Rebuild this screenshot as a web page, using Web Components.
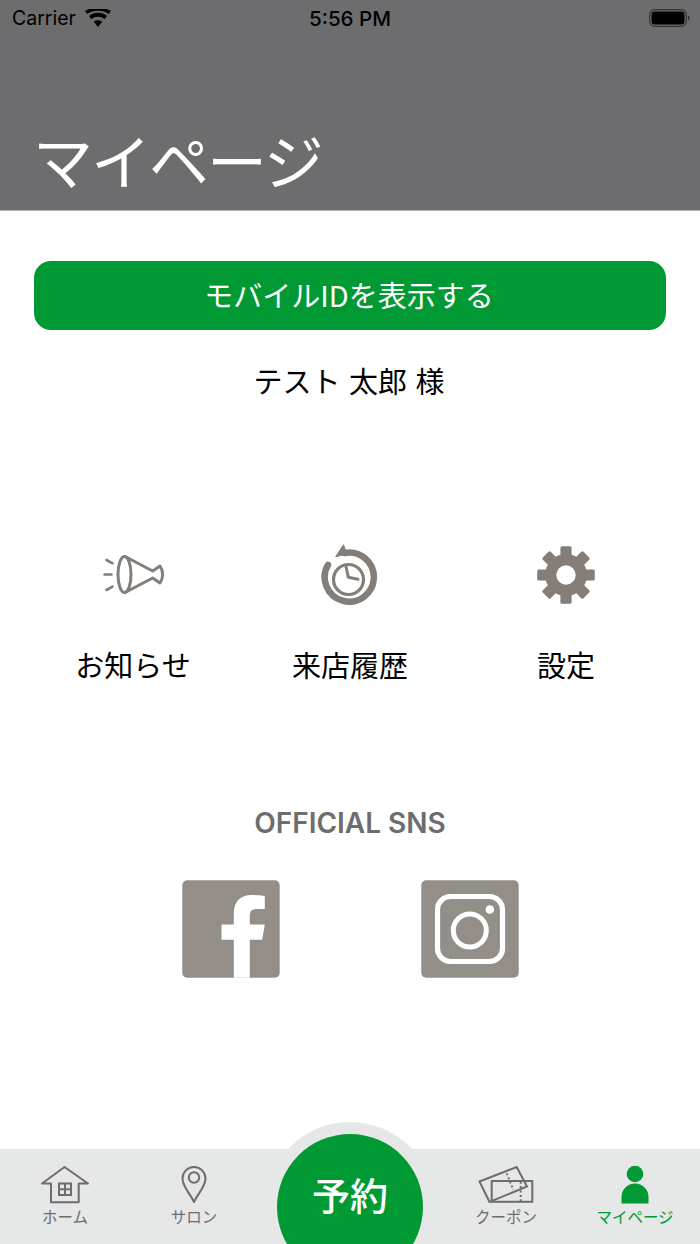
<!DOCTYPE html>
<html lang="ja">
<head>
<meta charset="utf-8">
<title>マイページ</title>
<style>
html, body { margin: 0; padding: 0; background: #fff; }
body { font-family: "Noto Sans CJK JP", "Noto Sans", sans-serif; }
</style>
</head>
<body>
<my-page>
  <page-header title="マイページ"></page-header>
  <id-button>モバイルIDを表示する</id-button>
  <user-name>テスト 太郎 様</user-name>
  <menu-row>
    <menu-item label="お知らせ">
      <svg slot="icon" width="64" height="64" viewBox="101 543 64 64" fill="none" stroke="#857d78" stroke-width="3" stroke-linecap="round" stroke-linejoin="round">
        <ellipse cx="124.5" cy="574.5" rx="6.5" ry="18"/>
        <path d="M125 556.5 152.7 571 160 566C163.5 571 163.5 578 160 583L152.7 578 125 592.5"/>
        <path d="M106.5 560 112.5 563.3M104.5 574.5H111.5M106.5 590 112.5 586.7" stroke-width="2.6"/>
      </svg>
    </menu-item>
    <menu-item label="来店履歴">
      <svg slot="icon" width="64" height="64" viewBox="318 543 64 64" fill="none" stroke="#857d78" stroke-linecap="round" stroke-linejoin="round">
        <path d="M344.5 553A24.6 24.6 0 1 1 328 564.8" stroke-width="6.5"/>
        <path d="M343.3 545 335.7 556.7 346.7 554Z" fill="#857d78" stroke="#857d78" stroke-width="1"/>
        <circle cx="348.5" cy="579.5" r="15" stroke-width="3.2"/>
        <path d="M346 566.5 348.3 577.3 358 579.3" stroke-width="3"/>
      </svg>
    </menu-item>
    <menu-item label="設定">
      <svg slot="icon" width="64" height="64" viewBox="534 543 64 64">
        <g fill="#857d78" transform="translate(566 575)">
          <path fill-rule="evenodd" d="M-21 0A21 21 0 1 0 21 0 21 21 0 1 0-21 0ZM-9.7 0A9.7 9.7 0 1 1 9.7 0 9.7 9.7 0 1 1-9.7 0Z"/>
          <rect x="-5.6" y="-28.8" width="11.2" height="12" rx="1.6"/>
          <rect x="-5.6" y="-28.8" width="11.2" height="12" rx="1.6" transform="rotate(45)"/>
          <rect x="-5.6" y="-28.8" width="11.2" height="12" rx="1.6" transform="rotate(90)"/>
          <rect x="-5.6" y="-28.8" width="11.2" height="12" rx="1.6" transform="rotate(135)"/>
          <rect x="-5.6" y="-28.8" width="11.2" height="12" rx="1.6" transform="rotate(180)"/>
          <rect x="-5.6" y="-28.8" width="11.2" height="12" rx="1.6" transform="rotate(225)"/>
          <rect x="-5.6" y="-28.8" width="11.2" height="12" rx="1.6" transform="rotate(270)"/>
          <rect x="-5.6" y="-28.8" width="11.2" height="12" rx="1.6" transform="rotate(315)"/>
        </g>
      </svg>
    </menu-item>
  </menu-row>
  <sns-links heading="OFFICIAL SNS">
    <svg width="98" height="98" viewBox="181.5 879.5 98 98">
      <rect x="181.8" y="879.8" width="97.4" height="97.4" rx="5" fill="#948e89"/>
      <path fill="#fff" d="M233.3 977.2V939.3H221V924H233.3V913C233.3 901 240 894.5 251 894.5 256 894.5 261 895 264.3 895.5V908.5H257C251 908.5 249.3 911 249.3 915V924H264.3L261.7 939.3H249.3V977.2Z"/>
    </svg>
    <svg width="98" height="98" viewBox="420.5 879.5 98 98">
      <rect x="420.8" y="879.8" width="97.4" height="97.4" rx="5" fill="#948e89"/>
      <rect x="437" y="896" width="65" height="65" rx="13" fill="none" stroke="#fff" stroke-width="5.2"/>
      <circle cx="469.3" cy="930" r="16.5" fill="none" stroke="#fff" stroke-width="5"/>
      <circle cx="489.3" cy="909" r="4.3" fill="#fff"/>
    </svg>
  </sns-links>
  <tab-bar slot="tabs">
    <tab-item label="ホーム">
      <svg width="60" height="40" viewBox="35 1165 60 40" fill="none" stroke="#6d6d6f" stroke-width="2">
        <path d="M51 1183.5H42L64.5 1167 88 1183.5H78.7V1202.3H51Z" stroke-linejoin="round"/>
        <path d="M59 1183.5H71V1195H59ZM65 1183.5V1195M59 1189.2H71"/>
      </svg>
    </tab-item>
    <tab-item label="サロン">
      <svg width="60" height="40" viewBox="164 1165 60 40" fill="none" stroke="#6d6d6f" stroke-width="2">
        <path d="M194 1202C190 1193 182.5 1187 182.5 1178.5A11.5 11.5 0 0 1 205.5 1178.5C205.5 1187 198 1193 194 1202Z" stroke-linejoin="round"/>
        <circle cx="194" cy="1177.5" r="5.2"/>
      </svg>
    </tab-item>
    <reserve-button>予約</reserve-button>
    <tab-item label="クーポン">
      <svg width="60" height="40" viewBox="476 1165 60 40" fill="none" stroke="#6d6d6f" stroke-width="2">
        <path d="M479.5 1181.5 516.7 1167 527 1186.5 489.5 1202Z"/>
        <rect x="491.7" y="1181" width="40.6" height="20.8"/>
        <path d="M506.7 1173.3 513.3 1190M520.7 1181.7V1201.7" stroke-dasharray="2 2.4"/>
      </svg>
    </tab-item>
    <tab-item label="マイページ" active>
      <svg width="60" height="40" viewBox="605 1165 60 40" fill="#009933">
        <circle cx="635" cy="1174" r="8.3"/>
        <path d="M621.5 1203.5V1197A13.5 13.5 0 0 1 648.5 1197V1203.5Z"/>
      </svg>
    </tab-item>
  </tab-bar>
</my-page>

<script>
class MyPage extends HTMLElement {
  constructor() {
    super();
    this.attachShadow({ mode: 'open' });
    this.shadowRoot.innerHTML = `
<style>
:host {
  display: flex;
  flex-direction: column;
  width: 700px;
  height: 1244px;
  overflow: hidden;
  background: #fff;
}
main {
  flex: 1;
  display: flex;
  flex-direction: column;
  min-height: 0;
}
</style>
<main><slot></slot></main>
<slot name="tabs"></slot>
`;
  }
}
customElements.define('my-page', MyPage);

class PageHeader extends HTMLElement {
  constructor() {
    super();
    this.attachShadow({ mode: 'open' });
    this.shadowRoot.innerHTML = `
<style>
:host {
  display: flex;
  flex-direction: column;
  height: 210px;
  background: #6d6d6f;
  border-bottom: 1px solid #b4b4b5;
}
.status {
  display: grid;
  grid-template-columns: 1fr auto 1fr;
  align-items: center;
  height: 36px;
  padding: 0 10px;
  color: #000;
  font-family: Inter, "Liberation Sans", sans-serif;
  font-size: 19.5px;
}
.left { display: flex; align-items: center; gap: 9px; padding-left: 2px; }
.time { font-weight: 500; font-size: 20.6px; }
.right { display: flex; justify-content: flex-end; }
h1 {
  margin: auto 0 0;
  padding: 0 0 16px 33px;
  color: #fff;
  font-family: "Noto Sans CJK JP", "Noto Sans", sans-serif;
  font-size: 60px;
  line-height: 70px;
  font-weight: 400;
  letter-spacing: -2px;
}
</style>
<div class="status">
  <div class="left">
    <span>Carrier</span>
    <svg width="26" height="18" viewBox="0 0 26 18"><path d="M13 18 8.8 12.8C11.2 10.8 14.8 10.8 17.2 12.8ZM6.6 10.2 4 7C9 2.6 17 2.6 22 7L19.4 10.2C15.6 7 10.4 7 6.6 10.2ZM2.4 5 0 2C7 -2.6 19 -2.6 26 2L23.6 5C18 .8 8 .8 2.4 5Z"/></svg>
  </div>
  <span class="time">5:56 PM</span>
  <div class="right">
    <svg width="41" height="18" viewBox="0 0 41 18">
      <rect x=".7" y=".7" width="36.6" height="16.6" rx="5" fill="none" stroke="#333" stroke-width="1.2"/>
      <rect x="2.5" y="2.5" width="33" height="13" rx="3.2"/>
      <path d="M39 6.5C40.2 7 40.6 8 40.6 9S40.2 11 39 11.5Z" fill="#333"/>
    </svg>
  </div>
</div>
<h1></h1>
`;
    this.shadowRoot.querySelector('h1').textContent = this.getAttribute('title');
    this.removeAttribute('title');
  }
}
customElements.define('page-header', PageHeader);

class IdButton extends HTMLElement {
  constructor() {
    super();
    this.attachShadow({ mode: 'open' });
    this.shadowRoot.innerHTML = `
<style>
:host {
  display: flex;
  align-items: center;
  justify-content: center;
  box-sizing: border-box;
  height: 69px;
  margin: 50px 34px 0;
  padding: 0 2px 4px 0;
  border-radius: 17px;
  background: #009933;
  color: #fff;
  font-family: "Noto Sans CJK JP", "Noto Sans", sans-serif;
  font-size: 29px;
}
</style>
<slot></slot>
`;
  }
}
customElements.define('id-button', IdButton);

class UserName extends HTMLElement {
  constructor() {
    super();
    this.attachShadow({ mode: 'open' });
    this.shadowRoot.innerHTML = `
<style>
:host {
  display: block;
  margin-top: 28px;
  padding-right: 2px;
  text-align: center;
  color: #000;
  font-family: "Noto Sans CJK JP", "Noto Sans", sans-serif;
  font-size: 29px;
  word-spacing: 2px;
  line-height: 44px;
}
</style>
<slot></slot>
`;
  }
}
customElements.define('user-name', UserName);

class MenuRow extends HTMLElement {
  constructor() {
    super();
    this.attachShadow({ mode: 'open' });
    this.shadowRoot.innerHTML = `
<style>
:host {
  display: grid;
  grid-template-columns: 216px 218px 214px;
  padding-left: 25px;
  margin-top: 141px;
}
</style>
<slot></slot>
`;
  }
}
customElements.define('menu-row', MenuRow);

class MenuItem extends HTMLElement {
  constructor() {
    super();
    this.attachShadow({ mode: 'open' });
    this.shadowRoot.innerHTML = `
<style>
:host {
  display: flex;
  flex-direction: column;
  align-items: center;
  gap: 37px;
}
::slotted(svg) { display: block; }
span {
  color: #000;
  font-family: "Noto Sans CJK JP", "Noto Sans", sans-serif;
  font-size: 29px;
  line-height: 40px;
}
</style>
<slot name="icon"></slot>
<span></span>
`;
    this.shadowRoot.querySelector('span').textContent = this.getAttribute('label');
  }
}
customElements.define('menu-item', MenuItem);

class SnsLinks extends HTMLElement {
  constructor() {
    super();
    this.attachShadow({ mode: 'open' });
    this.shadowRoot.innerHTML = `
<style>
:host {
  display: flex;
  flex-direction: column;
  align-items: center;
  margin-top: 121px;
}
h2 {
  margin: 0;
  color: #6d6d6f;
  font-family: Inter, "Liberation Sans", sans-serif;
  font-size: 28px;
  line-height: 36px;
  font-weight: 600;
}
.icons {
  display: flex;
  gap: 141px;
  margin-top: 39px;
}
::slotted(svg) { display: block; }
</style>
<h2></h2>
<div class="icons"><slot></slot></div>
`;
    this.shadowRoot.querySelector('h2').textContent = this.getAttribute('heading');
  }
}
customElements.define('sns-links', SnsLinks);

class TabBar extends HTMLElement {
  constructor() {
    super();
    this.attachShadow({ mode: 'open' });
    this.shadowRoot.innerHTML = `
<style>
:host {
  display: grid;
  grid-template-columns: 130px 128px 1fr 128px 130px;
  height: 95px;
  background: #e6e7e7;
}
</style>
<slot></slot>
`;
  }
}
customElements.define('tab-bar', TabBar);

class TabItem extends HTMLElement {
  constructor() {
    super();
    this.attachShadow({ mode: 'open' });
    this.shadowRoot.innerHTML = `
<style>
:host {
  display: flex;
  flex-direction: column;
  align-items: center;
  padding-top: 16px;
  color: #6d6d6f;
  font-family: "Noto Sans CJK JP", "Noto Sans", sans-serif;
  font-size: 15.5px;
  line-height: 22px;
}
:host([active]) { color: #009933; }
::slotted(svg) { display: block; }
</style>
<slot></slot>
<span></span>
`;
    this.shadowRoot.querySelector('span').textContent = this.getAttribute('label');
  }
}
customElements.define('tab-item', TabItem);

class ReserveButton extends HTMLElement {
  constructor() {
    super();
    this.attachShadow({ mode: 'open' });
    this.shadowRoot.innerHTML = `
<style>
:host {
  display: block;
  position: relative;
}
.ring {
  position: absolute;
  left: 7px;
  top: -27px;
  width: 170px;
  height: 170px;
  border-radius: 50%;
  background: #e6e7e7;
}
.btn {
  position: absolute;
  left: 19px;
  top: -15px;
  width: 146px;
  height: 146px;
  padding-top: 28px;
  box-sizing: border-box;
  border-radius: 50%;
  background: #009933;
  color: #fff;
  text-align: center;
  font-family: "Noto Sans CJK JP", "Noto Sans", sans-serif;
  font-size: 38px;
  font-weight: 500;
  line-height: 64px;
}
</style>
<div class="ring"></div>
<div class="btn"><slot></slot></div>
`;
  }
}
customElements.define('reserve-button', ReserveButton);
</script>
</body>
</html>
